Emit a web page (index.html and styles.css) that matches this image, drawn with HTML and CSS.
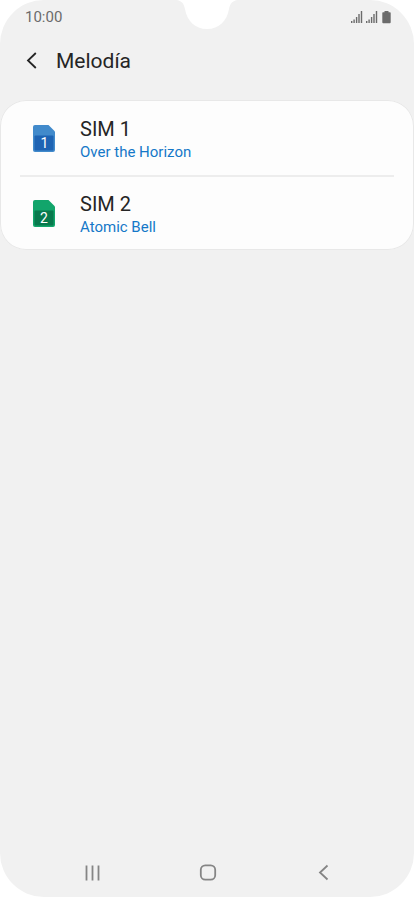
FILE: index.html
```html
<!DOCTYPE html>
<html lang="es">
<head>
  <meta charset="utf-8">
  <meta name="viewport" content="width=device-width, initial-scale=1">
  <title>Melodía</title>
  <link rel="stylesheet" href="styles.css">
</head>
<body>
  <div class="screen">
    <svg class="notch" width="60" height="30" viewBox="0 0 60 30" aria-hidden="true">
      <path d="M0 0C5 1 7 4 8 9C10 21 18 29 30 29S50 21 52 9C53 4 55 1 60 0Z"/>
    </svg>
    <div class="status">
      <time class="clock">10:00</time>
      <div class="indicators">
        <svg width="12" height="13" viewBox="0 0 12 13" aria-hidden="true"><path d="M0 10h1.400v2H0zM2.400 8.500h1.400V12H2.400zM4.900 6h1.400v6H4.900zM7.300 3h1.400v9H7.300zM9.800 0h1.400v12H9.800z"/></svg>
        <svg width="12" height="13" viewBox="0 0 12 13" aria-hidden="true"><path d="M0 10h1.400v2H0zM2.400 8.500h1.400V12H2.400zM4.900 6h1.400v6H4.900zM7.300 3h1.400v9H7.300zM9.800 0h1.400v12H9.800z"/></svg>
        <svg class="battery" width="9" height="13" viewBox="0 0 9 13" aria-hidden="true"><path d="M2.500 0h4v1.300H8q.7 0 .7.700v9.300q0 .9-.9.900H1.200q-.9 0-.9-.9V2q0-.7.700-.7h1.500z"/></svg>
      </div>
    </div>
    <header class="header">
      <button class="back" type="button" aria-label="Atrás">
        <svg width="12" height="18" viewBox="0 0 12 18" aria-hidden="true"><path d="M9.800 1L2 8.500l7.800 7.500"/></svg>
      </button>
      <h1>Melodía</h1>
    </header>
    <main class="list">
      <a class="row" href="#sim1">
        <svg class="sim sim-1" width="22" height="28" viewBox="0 0 22 28" aria-hidden="true">
          <path class="card" d="M2 0h13.500L22 6.500V25q0 2-2 2H2q-2 0-2-2V2q0-2 2-2z"/>
          <rect class="chip" x="1.500" y="10.500" width="19" height="15" rx="1"/>
          <text x="11.500" y="23">1</text>
        </svg>
        <span class="label"><span class="name">SIM 1</span><span class="tone">Over the Horizon</span></span>
      </a>
      <a class="row" href="#sim2">
        <svg class="sim sim-2" width="22" height="28" viewBox="0 0 22 28" aria-hidden="true">
          <path class="card" d="M2 0h13.500L22 6.500V25q0 2-2 2H2q-2 0-2-2V2q0-2 2-2z"/>
          <rect class="chip" x="1.500" y="10.500" width="19" height="15" rx="1"/>
          <text x="11" y="23">2</text>
        </svg>
        <span class="label"><span class="name">SIM 2</span><span class="tone">Atomic Bell</span></span>
      </a>
    </main>
    <nav class="nav">
      <button type="button" aria-label="Recientes"><svg width="18" height="18" viewBox="0 0 18 18" aria-hidden="true"><path d="M2.500 1.500v15M8.500 1.500v15M14.500 1.500v15"/></svg></button>
      <button type="button" aria-label="Inicio"><svg width="18" height="18" viewBox="0 0 18 18" aria-hidden="true"><rect x="1.800" y="1.300" width="14.400" height="14.400" rx="4.500"/></svg></button>
      <button type="button" aria-label="Volver"><svg width="18" height="18" viewBox="0 0 18 18" aria-hidden="true"><path d="M13.500 1.500L6 8.500l7.500 7"/></svg></button>
    </nav>
  </div>
</body>
</html>
```
FILE: styles.css
```css
* {
  box-sizing: border-box;
}

body {
  margin: 0;
  background: #fff;
  color: #252525;
  font-family: Roboto, "Liberation Sans", sans-serif;
}

button {
  display: flex;
  align-items: center;
  justify-content: center;
  padding: 0;
  border: 0;
  background: none;
}

.screen {
  position: relative;
  display: flex;
  flex-direction: column;
  min-height: 100vh;
  overflow: hidden;
  border-radius: 44px;
  background: #f1f1f1;
}

.notch {
  position: absolute;
  top: 0;
  left: 50%;
  margin-left: -30px;
  fill: #fff;
}

.status {
  display: flex;
  align-items: center;
  justify-content: space-between;
  height: 34px;
  padding: 0 23px 0 25px;
}

.clock {
  color: #6b6b6b;
  font-size: 15px;
  line-height: 34px;
}

.indicators {
  display: flex;
  gap: 3px;
  fill: #6b6b6b;
}

.battery {
  margin-left: 1px;
}

.header {
  display: flex;
  align-items: center;
  gap: 17px;
  height: 54px;
  padding: 0 24px;
}

.back {
  width: 15px;
  height: 32px;
}

.back path {
  fill: none;
  stroke: #252525;
  stroke-width: 1.8;
}

h1 {
  margin: 0;
  font-size: 21px;
  font-weight: 400;
  line-height: 28px;
}

.list {
  margin-top: 12px;
  border-radius: 26px;
  background: #fdfdfd;
  box-shadow: inset 0 0 0 1px #e8e8e8;
}

.row {
  position: relative;
  display: flex;
  align-items: center;
  gap: 25px;
  height: 75px;
  padding: 3px 33px 0;
  color: inherit;
  text-decoration: none;
}

.row + .row::before {
  content: "";
  position: absolute;
  top: 0;
  right: 20px;
  left: 20px;
  height: 2px;
  background: #ededed;
}

.label {
  display: flex;
  flex-direction: column;
}

.name {
  font-size: 20px;
  line-height: 26px;
}

.tone {
  color: #1578c8;
  font-size: 15px;
  line-height: 20px;
}

.sim text {
  fill: #fff;
  font-size: 14px;
  text-anchor: middle;
}

.sim-1 .card {
  fill: #418acb;
}

.sim-1 .chip {
  fill: #1e63b3;
}

.sim-2 .card {
  fill: #12a56b;
}

.sim-2 .chip {
  fill: #08794d;
}

.nav {
  display: grid;
  grid-template-columns: repeat(3, 28%);
  justify-content: center;
  height: 48px;
  margin-top: auto;
  padding-left: 2px;
}

.nav svg {
  fill: none;
  stroke: #858585;
  stroke-width: 1.8;
}
```
